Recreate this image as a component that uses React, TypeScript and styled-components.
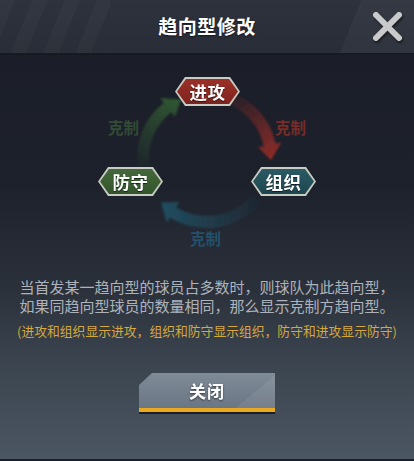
import React from "react";
import styled, { createGlobalStyle } from "styled-components";

const Global = createGlobalStyle`
  html, body { margin: 0; padding: 0; background: #1a1c24; }
  body { font-family: "Noto Sans CJK SC", "Noto Sans", sans-serif; }
`;

const Screen = styled.div`
  width: 414px;
  height: 461px;
  display: flex;
  flex-direction: column;
  overflow: hidden;
  background: #1a1c24;
`;

const Header = styled.div`
  height: 53px;
  display: grid;
  grid-template-columns: 1fr auto 1fr;
  align-items: center;
  background:
    linear-gradient(112deg, transparent 0 83%, rgba(255,255,255,0.035) 83% 100%),
    repeating-linear-gradient(112deg, rgba(255,255,255,0.025) 0 14px, transparent 14px 30px) 0 0 / 110px 100% no-repeat,
    linear-gradient(180deg, #2e323d, #292d37);
`;

const Title = styled.div`
  grid-column: 2;
  color: #ffffff;
  font-size: 19px;
  font-weight: 700;
  letter-spacing: 0.5px;
  text-shadow: 0 1px 2px rgba(0,0,0,0.6);
  padding-bottom: 2px;
`;

const CloseBtn = styled.div`
  grid-column: 3;
  justify-self: end;
  margin-right: 11px;
  width: 31px;
  height: 31px;
  display: flex;
  filter: drop-shadow(1px 2px 1px rgba(0,0,0,0.5));
`;

const Divider = styled.div`
  height: 2px;
  background: #181a21;
`;

const Body = styled.div`
  flex: 1;
  display: flex;
  flex-direction: column;
  align-items: center;
  background: linear-gradient(180deg, #1b1e28 0%, #1d212b 32%, #2b313b 58%, #3c4651 78%, #4a5662 100%);
  border-bottom: 2px solid #1d2127;
`;

const Diagram = styled.div`
  position: relative;
  width: 414px;
  height: 210px;
  flex: none;
`;

const ArrowLayer = styled.svg`
  position: absolute;
  left: 0;
  top: 0;
`;

const BadgeOuter = styled.div<{ $x: number; $y: number }>`
  position: absolute;
  left: ${(p) => p.$x}px;
  top: ${(p) => p.$y}px;
  width: 65px;
  height: 29px;
  padding: 2px;
  box-sizing: border-box;
  background: #c9ccc4;
  clip-path: polygon(10px 0, calc(100% - 10px) 0, 100% 50%, calc(100% - 10px) 100%, 10px 100%, 0 50%);
  filter: drop-shadow(0 0 1px #000);
`;

const BadgeInner = styled.div<{ $c1: string; $c2: string }>`
  width: 100%;
  height: 100%;
  display: flex;
  align-items: center;
  justify-content: center;
  background: linear-gradient(180deg, ${(p) => p.$c1}, ${(p) => p.$c2});
  clip-path: polygon(9px 0, calc(100% - 9px) 0, 100% 50%, calc(100% - 9px) 100%, 9px 100%, 0 50%);
  color: #ffffff;
  font-size: 17.5px;
  font-weight: 700;
  letter-spacing: 0.5px;
  text-shadow: 0 1px 1px rgba(0,0,0,0.6);
`;

const Relation = styled.div<{ $x: number; $y: number; $c: string }>`
  position: absolute;
  left: ${(p) => p.$x}px;
  top: ${(p) => p.$y}px;
  color: ${(p) => p.$c};
  font-size: 15.5px;
  font-weight: 700;
  line-height: 18px;
`;

const Desc = styled.div`
  margin-top: 12px;
  width: 390px;
  text-align: center;
  color: #aeb3bb;
  font-size: 15px;
  line-height: 19px;
`;

const Note = styled.div`
  margin-top: 7px;
  width: 404px;
  text-align: center;
  color: #d6a83c;
  font-size: 12.8px;
  line-height: 17px;
  white-space: nowrap;
`;

const ButtonWrap = styled.div`
  margin-top: 34px;
  filter: drop-shadow(0 2px 0 rgba(20,24,30,0.85));
`;

const Button = styled.div`
  width: 136px;
  height: 35px;
  border-bottom: 4px solid #e9aa22;
  display: flex;
  align-items: center;
  justify-content: center;
  clip-path: polygon(13px 0, 100% 0, 100% 100%, 0 100%, 0 12px);
  background:
    linear-gradient(140deg, transparent 0 78%, rgba(255,255,255,0.07) 78% 100%),
    linear-gradient(180deg, #7f8b97, #6a7683);
  color: #ffffff;
  font-size: 17px;
  font-weight: 700;
  letter-spacing: 1px;
  text-shadow: 0 1px 2px rgba(0,0,0,0.55);
`;

const CX = 207;
const CY = 103;
const R = 64;

function pt(r: number, deg: number): [number, number] {
  const a = (deg * Math.PI) / 180;
  return [CX + r * Math.cos(a), CY + r * Math.sin(a)];
}

function arrowPath(a0: number, a1: number, w: number, hw: number, hd: number): string {
  const ae = a1 - hd;
  const o0 = pt(R + w, a0);
  const o1 = pt(R + w, ae);
  const h1 = pt(R + hw, ae);
  const tip = pt(R, a1);
  const h2 = pt(R - hw, ae);
  const i1 = pt(R - w, ae);
  const i0 = pt(R - w, a0);
  const f = (p: [number, number]) => `${p[0].toFixed(1)} ${p[1].toFixed(1)}`;
  return `M ${f(o0)} A ${R + w} ${R + w} 0 0 1 ${f(o1)} L ${f(h1)} L ${f(tip)} L ${f(h2)} L ${f(i1)} A ${R - w} ${R - w} 0 0 0 ${f(i0)} Z`;
}

const arrows = [
  { id: "g", a0: 172, a1: 246, color: "#335f34" },
  { id: "r", a0: 290, a1: 362, color: "#9a2c27" },
  { id: "b", a0: 40, a1: 136, color: "#1f5266" },
];

export default function App() {
  return (
    <Screen>
      <Global />
      <Header>
        <Title>趋向型修改</Title>
        <CloseBtn>
          <svg width="31" height="31" viewBox="0 0 31 31">
            <line x1="4" y1="4" x2="27" y2="27" stroke="#c8cacc" strokeWidth="6" strokeLinecap="round" />
            <line x1="27" y1="4" x2="4" y2="27" stroke="#c8cacc" strokeWidth="6" strokeLinecap="round" />
          </svg>
        </CloseBtn>
      </Header>
      <Divider />
      <Body>
        <Diagram>
          <ArrowLayer width="414" height="210" viewBox="0 0 414 210">
            <defs>
              <filter id="soft" x="-10%" y="-10%" width="120%" height="120%">
                <feGaussianBlur stdDeviation="0.8" />
              </filter>
              {arrows.map((a) => {
                const t = pt(R, a.a0);
                const h = pt(R, a.a1);
                return (
                  <linearGradient
                    key={a.id}
                    id={`grad-${a.id}`}
                    gradientUnits="userSpaceOnUse"
                    x1={t[0]}
                    y1={t[1]}
                    x2={h[0]}
                    y2={h[1]}
                  >
                    <stop offset="0" stopColor={a.color} stopOpacity="0.08" />
                    <stop offset="0.6" stopColor={a.color} stopOpacity="0.55" />
                    <stop offset="1" stopColor={a.color} stopOpacity="0.9" />
                  </linearGradient>
                );
              })}
            </defs>
            {arrows.map((a) => (
              <path key={a.id} d={arrowPath(a.a0, a.a1, 6, 12, 14)} fill={`url(#grad-${a.id})`} filter="url(#soft)" />
            ))}
          </ArrowLayer>
          <Relation $x={108} $y={63} $c="#314b35">克制</Relation>
          <Relation $x={275} $y={63} $c="#762c28">克制</Relation>
          <Relation $x={190} $y={174} $c="#23506a">克制</Relation>
          <BadgeOuter $x={175} $y={22}>
            <BadgeInner $c1="#9a3028" $c2="#7f231e">进攻</BadgeInner>
          </BadgeOuter>
          <BadgeOuter $x={98} $y={112}>
            <BadgeInner $c1="#44683a" $c2="#33552d">防守</BadgeInner>
          </BadgeOuter>
          <BadgeOuter $x={251} $y={112}>
            <BadgeInner $c1="#2a5a64" $c2="#1e4750">组织</BadgeInner>
          </BadgeOuter>
        </Diagram>
        <Desc>
          当首发某一趋向型的球员占多数时，则球队为此趋向型，
          <br />
          如果同趋向型球员的数量相同，那么显示克制方趋向型。
        </Desc>
        <Note>(进攻和组织显示进攻，组织和防守显示组织，防守和进攻显示防守)</Note>
        <ButtonWrap>
          <Button>关闭</Button>
        </ButtonWrap>
      </Body>
    </Screen>
  );
}
